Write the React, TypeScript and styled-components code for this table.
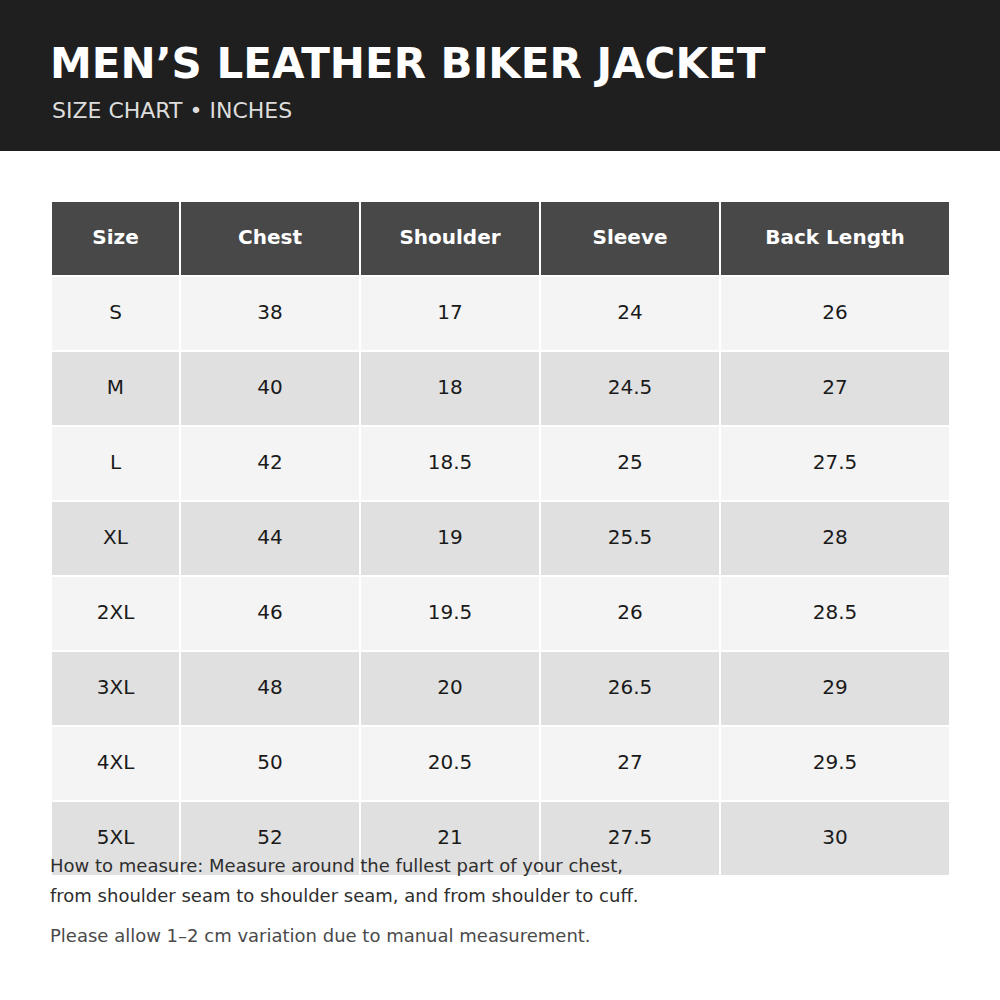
import React from "react";
import styled, { createGlobalStyle } from "styled-components";

const Global = createGlobalStyle`
  html, body { margin: 0; padding: 0; background: #ffffff; }
  body { font-family: "DejaVu Sans", "Liberation Sans", sans-serif; }
`;

const Page = styled.div`
  width: 1000px;
  height: 1000px;
  background: #ffffff;
  display: flex;
  flex-direction: column;
  overflow: hidden;
`;

const Header = styled.header`
  box-sizing: border-box;
  height: 151px;
  flex: none;
  background: #1f1f1f;
  padding: 39px 50px 0 50px;
`;

const Title = styled.h1`
  margin: 0;
  font-size: 42px;
  line-height: 1.2;
  font-weight: 700;
  color: #ffffff;
  letter-spacing: 0;
`;

const Subtitle = styled.div`
  margin-top: 9px;
  margin-left: 2px;
  font-size: 22px;
  line-height: 1.2;
  color: #dddddd;
`;

const Main = styled.main`
  padding: 49px 50px 0 50px;
`;

const TableWrap = styled.div`
  height: 651px;
`;

const Table = styled.table`
  width: 901px;
  border-collapse: separate;
  border-spacing: 2px;
  table-layout: fixed;
`;

const Th = styled.th<{ $w: number }>`
  width: ${(p) => p.$w}px;
  height: 73px;
  padding: 0 0 3px 0;
  box-sizing: border-box;
  background: #484848;
  color: #ffffff;
  font-size: 20px;
  font-weight: 700;
  text-align: center;
  vertical-align: middle;
`;

const Td = styled.td<{ $alt: boolean }>`
  height: 73px;
  padding: 0 0 3px 0;
  box-sizing: border-box;
  background: ${(p) => (p.$alt ? "#e0e0e0" : "#f4f4f4")};
  color: #1a1a1a;
  font-size: 20px;
  text-align: center;
  vertical-align: middle;
`;

const Notes = styled.div`
  color: #333333;
`;

const Note = styled.p<{ $muted?: boolean }>`
  margin: 0 0 10px 0;
  font-size: 18px;
  line-height: 30px;
  color: ${(p) => (p.$muted ? "#4a4a4a" : "#2e2e2e")};
`;

const columns = [
  { label: "Size", w: 127 },
  { label: "Chest", w: 178 },
  { label: "Shoulder", w: 178 },
  { label: "Sleeve", w: 178 },
  { label: "Back Length", w: 228 },
];

const rows = [
  ["S", "38", "17", "24", "26"],
  ["M", "40", "18", "24.5", "27"],
  ["L", "42", "18.5", "25", "27.5"],
  ["XL", "44", "19", "25.5", "28"],
  ["2XL", "46", "19.5", "26", "28.5"],
  ["3XL", "48", "20", "26.5", "29"],
  ["4XL", "50", "20.5", "27", "29.5"],
  ["5XL", "52", "21", "27.5", "30"],
];

export default function App() {
  return (
    <>
      <Global />
      <Page>
        <Header>
          <Title>MEN’S LEATHER BIKER JACKET</Title>
          <Subtitle>SIZE CHART • INCHES</Subtitle>
        </Header>
        <Main>
          <TableWrap>
            <Table>
              <thead>
                <tr>
                  {columns.map((c) => (
                    <Th key={c.label} $w={c.w}>
                      {c.label}
                    </Th>
                  ))}
                </tr>
              </thead>
              <tbody>
                {rows.map((r, i) => (
                  <tr key={r[0]}>
                    {r.map((v, j) => (
                      <Td key={j} $alt={i % 2 === 1}>
                        {v}
                      </Td>
                    ))}
                  </tr>
                ))}
              </tbody>
            </Table>
          </TableWrap>
          <Notes>
            <Note>
              How to measure: Measure around the fullest part of your chest,
              <br />
              from shoulder seam to shoulder seam, and from shoulder to cuff.
            </Note>
            <Note $muted>Please allow 1–2 cm variation due to manual measurement.</Note>
          </Notes>
        </Main>
      </Page>
    </>
  );
}
